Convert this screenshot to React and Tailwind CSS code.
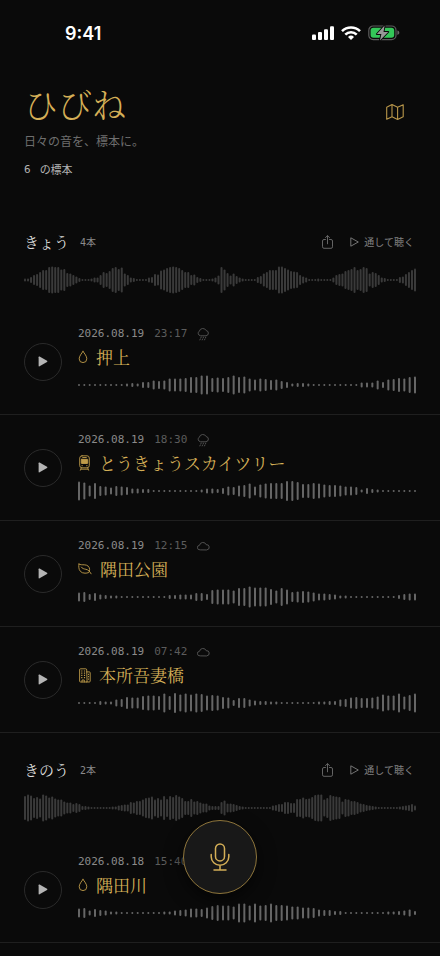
import React from "react";

const SANS = "font-['Liberation_Sans','Noto_Sans_CJK_JP',sans-serif]";
const MINCHO = "font-['Hiragino_Mincho_ProN','Noto_Serif_CJK_JP','Noto_Sans_CJK_JP',serif]";
const MONO = "font-['DejaVu_Sans_Mono','Noto_Sans_CJK_JP',monospace]";

const days = [
  {
    id: "today",
    label: "きょう",
    count: "4本",
    wave: [
      3, 3, 6, 10, 12, 16, 20, 20, 26, 27, 26, 26, 21, 22, 14, 13, 10, 7, 4, 2, 2, 2, 3, 5, 5, 10, 16, 14, 18, 24, 26, 22,
      25, 13, 10, 5, 4, 2, 2, 2, 2, 5, 6, 12, 11, 19, 21, 24, 26, 27, 26, 24, 20, 16, 16, 10, 11, 6, 4, 2, 2, 2, 3, 5, 9,
      26, 21, 14, 9, 13, 8, 5, 3, 2, 2, 2, 2, 6, 8, 13, 16, 20, 20, 20, 27, 27, 24, 21, 18, 17, 16, 10, 7, 5, 2, 2, 2, 3,
      2, 2, 2, 2, 5, 10, 12, 13, 18, 20, 22, 26, 20, 22, 26, 24, 13, 16, 14, 10, 5, 4, 2, 2, 2, 2, 6, 7, 12, 16, 20, 23,
    ],
    items: [
      {
        date: "2026.08.19",
        time: "23:17",
        weather: "rain",
        kind: "drop",
        place: "押上",
        wave: [
          2, 2, 2, 2, 2, 2, 2, 2, 2, 3, 4, 3, 6, 6, 9, 8, 9, 13, 13, 13, 14, 16, 16, 19, 19, 14, 15, 14, 16, 19, 16, 17, 13,
          11, 13, 12, 10, 11, 8, 6, 3, 4, 4, 3, 2, 2, 2, 2, 2, 2, 2, 2, 2, 5, 5, 5, 9, 6, 11, 12, 14, 13, 16, 17,
        ],
      },
      {
        date: "2026.08.19",
        time: "18:30",
        weather: "rain",
        kind: "tram",
        place: "とうきょうスカイツリー",
        wave: [
          19, 17, 11, 16, 10, 9, 7, 10, 9, 8, 5, 5, 4, 4, 2, 2, 2, 2, 2, 2, 2, 2, 2, 3, 5, 5, 4, 6, 9, 8, 11, 12, 15, 9, 13,
          15, 16, 16, 16, 20, 20, 18, 14, 14, 16, 15, 13, 12, 12, 11, 9, 9, 8, 3, 6, 4, 3, 2, 2, 2, 2, 2, 2, 2,
        ],
      },
      {
        date: "2026.08.19",
        time: "12:15",
        weather: "cloud",
        kind: "leaf",
        place: "隅田公園",
        wave: [
          9, 10, 6, 8, 5, 4, 3, 3, 2, 2, 2, 2, 2, 2, 2, 2, 2, 4, 4, 5, 5, 5, 8, 8, 6, 14, 15, 15, 15, 13, 18, 18, 21, 19, 19,
          19, 16, 13, 18, 15, 10, 11, 12, 11, 9, 7, 7, 6, 5, 3, 3, 2, 2, 2, 2, 2, 2, 2, 2, 2, 4, 6, 7, 7,
        ],
      },
      {
        date: "2026.08.19",
        time: "07:42",
        weather: "cloud",
        kind: "building",
        place: "本所吾妻橋",
        wave: [
          2, 2, 2, 2, 4, 3, 3, 7, 8, 12, 11, 11, 14, 15, 15, 14, 19, 14, 20, 17, 19, 17, 19, 18, 15, 16, 15, 12, 11, 6, 10,
          10, 7, 5, 4, 4, 3, 3, 2, 2, 2, 2, 2, 2, 2, 3, 3, 4, 4, 7, 8, 11, 12, 10, 10, 11, 13, 17, 15, 15, 19, 13, 16, 19,
        ],
      },
    ],
  },
  {
    id: "yesterday",
    label: "きのう",
    count: "2本",
    wave: [
      24, 27, 25, 20, 22, 19, 27, 25, 21, 23, 19, 17, 17, 13, 11, 11, 8, 10, 8, 4, 4, 3, 2, 2, 2, 2, 2, 2, 2, 3, 3, 5, 6,
      7, 7, 12, 11, 14, 14, 17, 20, 21, 23, 17, 20, 17, 24, 18, 24, 22, 26, 23, 20, 14, 14, 18, 13, 14, 11, 9, 9, 5, 4, 4,
      4, 12, 15, 9, 9, 8, 6, 4, 3, 2, 2, 2, 2, 2, 2, 2, 2, 2, 5, 6, 8, 8, 12, 12, 10, 10, 18, 18, 21, 18, 19, 22, 26, 27,
      27, 17, 20, 26, 24, 23, 22, 13, 18, 17, 14, 14, 12, 9, 8, 6, 5, 4, 3, 2, 2, 2, 2, 2, 2, 2, 3, 4, 5, 6, 8, 5,
    ],
    items: [
      {
        date: "2026.08.18",
        time: "15:40",
        weather: "cloud",
        kind: "drop",
        place: "隅田川",
        wave: [
          9, 10, 5, 8, 6, 5, 3, 3, 2, 2, 2, 2, 2, 2, 2, 2, 3, 3, 5, 6, 7, 9, 9, 8, 11, 14, 16, 15, 15, 13, 19, 19, 15, 19, 15,
          16, 19, 16, 16, 15, 13, 13, 11, 11, 10, 7, 6, 6, 4, 4, 2, 2, 2, 2, 2, 2, 2, 2, 3, 3, 4, 5, 7, 4,
        ],
      },
    ],
  },
];

function Waveform({ values, width, height, className }) {
  const bar = 2;
  const step = (width - bar) / (values.length - 1);
  return (
    <svg
      aria-hidden="true"
      viewBox={`0 0 ${width} ${height}`}
      preserveAspectRatio="none"
      className={`block w-full ${className}`}
    >
      {values.map((v, i) => (
        <rect key={i} x={i * step} y={(height - v) / 2} width={bar} height={v} rx={1} fill="currentColor" />
      ))}
    </svg>
  );
}

function StatusBar() {
  return (
    <div className="flex h-[62px] items-center justify-between pt-1 pr-10 pl-[65px]">
      <span className="font-['Inter',sans-serif] text-[18px] font-semibold text-white">9:41</span>
      <div className="flex items-center gap-[7px]">
        <svg width="22" height="14" viewBox="0 0 22 14" fill="#fff" aria-hidden="true">
          <rect x="0" y="8.5" width="4" height="5.5" rx="1.1" />
          <rect x="6" y="6" width="4" height="8" rx="1.1" />
          <rect x="12" y="3.2" width="4" height="10.8" rx="1.1" />
          <rect x="18" y="0.3" width="4" height="13.7" rx="1.1" />
        </svg>
        <svg width="20" height="14" viewBox="0 0 20 14" fill="none" stroke="#fff" strokeWidth="2.6" aria-hidden="true">
          <path d="M1 5.1a12.9 12.9 0 0 1 18 0" />
          <path d="M4.300 8.700a8 8 0 0 1 11.400 0" />
          <path d="M10 14 7 11a4.400 4.400 0 0 1 6 0Z" fill="#fff" stroke="none" />
        </svg>
        <svg width="32" height="16" viewBox="0 0 32 16" fill="none" aria-hidden="true">
          <rect x="0.8" y="1" width="27.2" height="13.6" rx="4.4" stroke="#5c5c5c" strokeWidth="1.2" />
          <path d="M29.4 5.6c1.2.3 1.9 1.200 1.900 2.200s-.7 1.900-1.900 2.200z" fill="#666" />
          <rect x="2.600" y="2.800" width="23.600" height="10" rx="2.800" fill="#34c759" />
          <path
            d="M16.600.6 8.900 9.100h4.500l-1.500 6.300 8.300-8.500h-4.700z"
            fill="#989898"
            stroke="#0a0a0a"
            strokeWidth="1.900"
            paintOrder="stroke"
            strokeLinejoin="round"
          />
        </svg>
      </div>
    </div>
  );
}

function MapIcon() {
  return (
    <svg width="18" height="16" viewBox="0 0 18 16" fill="none" stroke="currentColor" strokeWidth="1.1" strokeLinejoin="round" aria-hidden="true">
      <path d="M.7 3.200 6 .6l5.600 2.700L17.200.8v12l-5.600 2.700L6 12.700.7 15.300zM6 .6v12.100M11.600 3.300v12.200" />
    </svg>
  );
}

function ShareIcon() {
  return (
    <svg width="11" height="14" viewBox="0 0 11 14" fill="none" stroke="currentColor" strokeWidth="0.9" strokeLinecap="round" strokeLinejoin="round" aria-hidden="true">
      <path d="M3.500 4.500H2A1.500 1.500 0 0 0 .5 6v5.800a1.500 1.500 0 0 0 1.500 1.500h7a1.500 1.500 0 0 0 1.500-1.500V6A1.500 1.500 0 0 0 9 4.500H7.500" />
      <path d="M5.500 8.800V.8M3.500 2.600l2-2 2 2" />
    </svg>
  );
}

function PlayOutlineIcon() {
  return (
    <svg width="9" height="10" viewBox="0 0 9 10" fill="none" stroke="currentColor" strokeWidth="0.9" strokeLinejoin="round" aria-hidden="true">
      <path d="M.8.800 8.300 5 .8 9.200z" />
    </svg>
  );
}

function WeatherIcon({ type }) {
  const rain = type === "rain";
  return (
    <svg width="13" height="13" viewBox="0 0 13 13" fill="none" stroke="currentColor" strokeWidth="0.9" strokeLinecap="round" aria-hidden="true">
      {rain ? (
        <>
          <path d="M3.100 7.700A2.500 2.500 0 0 1 2.300 3.200 3.700 3.700 0 0 1 9.200 2.600 2.600 2.600 0 0 1 9.400 7.700z" />
          <path d="M4.200 9.100l-.4.9M6.500 9.100l-.4.9M8.800 9.100l-.4.9M3.200 11.200l-.3.700M5.500 11.200l-.3.700M7.800 11.200l-.3.700" />
        </>
      ) : (
        <path d="M2.900 9.900A2.300 2.300 0 0 1 2.500 5.300 3.500 3.500 0 0 1 9.200 4.700 2.600 2.600 0 0 1 10 9.900z" />
      )}
    </svg>
  );
}

function PlaceIcon({ type }) {
  const line = { fill: "none", stroke: "currentColor", strokeWidth: 0.9, strokeLinejoin: "round", strokeLinecap: "round" };
  if (type === "drop") {
    return (
      <svg width="10" height="14" viewBox="0 0 10 14" {...line} aria-hidden="true">
        <path d="M5 1.400C3.500 3.500 1.200 6.200 1.200 8.800a3.800 3.800 0 0 0 7.600 0C8.800 6.200 6.500 3.500 5 1.400z" />
      </svg>
    );
  }
  if (type === "tram") {
    return (
      <svg width="13" height="16" viewBox="0 0 13 16" {...line} aria-hidden="true">
        <path d="M4 .8h5q2.300 0 2.300 2.300v7.400q0 2.300-2.300 2.300H4q-2.300 0-2.300-2.300V3.100Q1.700.8 4 .8z" />
        <path d="M4.700 2.500h3.600" />
        <rect x="3.300" y="4.300" width="6.400" height="4.200" rx="0.500" fill="currentColor" />
        <path d="M3.900 10.700h.5M8.600 10.700h.5M3.300 13l-.9 2.200M9.700 13l.9 2.200M3 14.200h7" />
      </svg>
    );
  }
  if (type === "leaf") {
    return (
      <svg width="14" height="12" viewBox="0 0 14 12" {...line} aria-hidden="true">
        <path d="M1 1.100c1.500.9 3.300.6 5.300.7 3.200.1 5.300 1.900 5.300 4.700 0 1.200-.3 2.200-.8 3C9.500 10 8.300 10.200 7 10.200 3 10.200 1 7.500.8 4.300.7 3 .8 1.900 1 1.100z" />
        <path d="M3.300 4.100c1 1.500 2.600 1.800 4.500 2.200 2.500.5 4 1.900 5.300 4.500" />
      </svg>
    );
  }
  return (
    <svg width="13" height="15" viewBox="0 0 13 15" {...line} aria-hidden="true">
      <path d="M8.700 14H2.500q-.9 0-.9-.9V1.700q0-.9.900-.9h5.300q.9 0 .9.900zM8.700 3.900h2.600q.9 0 .9.900v8.300q0 .9-.9.900H8.700M4 14v-2h2.300v2" />
      <path d="M3.200 3h1.200M5.900 3h1.200M3.200 5.200h1.200M5.900 5.200h1.200M3.200 7.400h1.200M5.900 7.400h1.200M3.200 9.600h1.200M5.900 9.600h1.200M10 6.300h.9M10 8.700h.9M10 11.100h.9" strokeWidth="1.200" strokeLinecap="butt" />
    </svg>
  );
}

function Recording({ item }) {
  return (
    <li className="flex items-center gap-4 border-b border-[#1f1f1f] px-6 py-4">
      <button
        type="button"
        aria-label={`${item.place}を再生`}
        className="flex size-[38px] shrink-0 items-center justify-center rounded-full border border-[#2a2a2a] text-[#b4b4b4]"
      >
        <svg width="10" height="11" viewBox="0 0 10 11" fill="currentColor" aria-hidden="true">
          <path d="M.6 1.200Q.6.100 1.600.6L9 4.800q.9.600 0 1.200L1.600 10.300Q.6 10.800.6 9.700z" />
        </svg>
      </button>
      <div className="min-w-0 flex-1">
        <div className={`flex h-[18px] items-center gap-[10px] text-[11px] leading-[18px] ${MONO}`}>
          <span className="text-[#8a8a8a]">{item.date}</span>
          <span className="text-[#5c5c5c]">{item.time}</span>
          <span className="text-[#585858]">
            <WeatherIcon type={item.weather} />
          </span>
        </div>
        <div className="mt-[2px] flex h-6 items-center gap-2 text-[#d4af57]">
          <span className="shrink-0 text-[#c09c4a]">
            <PlaceIcon type={item.kind} />
          </span>
          <h3 className={`truncate text-[17px] leading-6 font-normal ${MINCHO}`}>{item.place}</h3>
        </div>
        <Waveform values={item.wave} width={337} height={26} className="mt-[3px] h-[26px] text-[#666]" />
      </div>
    </li>
  );
}

function Day({ day }) {
  return (
    <section>
      <div className="px-6 pt-[25px] pb-[15px]">
        <div className="flex h-6 items-center">
          <h2 className={`text-[15px] leading-6 font-normal text-[#dcdcdc] ${MINCHO}`}>{day.label}</h2>
          <span className={`ml-[11px] text-[10px] text-[#8a8a8a] ${MONO}`}>{day.count}</span>
          <button type="button" aria-label="共有" className="ml-auto text-[#6e6e6e]">
            <ShareIcon />
          </button>
          <button type="button" className={`ml-[17px] flex items-center gap-[5px] pr-0.5 text-[10px] text-[#808080] ${SANS}`}>
            <PlayOutlineIcon />
            通して聴く
          </button>
        </div>
        <Waveform values={day.wave} width={392} height={28} className="mt-3 h-7 text-[#3a3a3a]" />
      </div>
      <ul>
        {day.items.map((item) => (
          <Recording key={item.date + item.time} item={item} />
        ))}
      </ul>
    </section>
  );
}

export default function App() {
  return (
    <div className={`min-h-screen bg-[#0a0a0a] ${SANS}`}>
      <StatusBar />
      <header className="flex items-start justify-between px-6 pt-[22px] pb-[27px]">
        <div>
          <h1 className={`text-[34px] leading-10 font-light text-[#d4af57] ${MINCHO}`}>ひびね</h1>
          <p className="mt-[10px] text-[12px] leading-4 text-[#6e6e6e]">日々の音を、標本に。</p>
          <p className="mt-3 flex gap-[9px] text-[11px] leading-4 text-[#b4b4b4]">
            <span className={MONO}>6</span>
            <span>の標本</span>
          </p>
        </div>
        <button type="button" aria-label="地図" className="mt-[6px] flex h-11 w-[42px] items-center justify-center text-[#b8964a]">
          <MapIcon />
        </button>
      </header>
      <main>
        {days.map((day) => (
          <Day key={day.id} day={day} />
        ))}
      </main>
      <button
        type="button"
        aria-label="録音"
        className="fixed bottom-[62px] left-1/2 flex size-[74px] -translate-x-1/2 items-center justify-center rounded-full border border-[#8f763c] bg-[#181818] text-[#d4af57] shadow-[0_6px_18px_rgba(0,0,0,0.6)]"
      >
        <svg width="20" height="28" viewBox="0 0 20 28" fill="none" stroke="currentColor" strokeWidth="1.500" strokeLinecap="round" aria-hidden="true">
          <rect x="5.500" y="0.900" width="9" height="17" rx="4.500" />
          <path d="M1.200 11.400v2.300a8.800 8.500 0 0 0 17.600 0v-2.300M10 22.200V27M4 27h12" />
        </svg>
      </button>
    </div>
  );
}
